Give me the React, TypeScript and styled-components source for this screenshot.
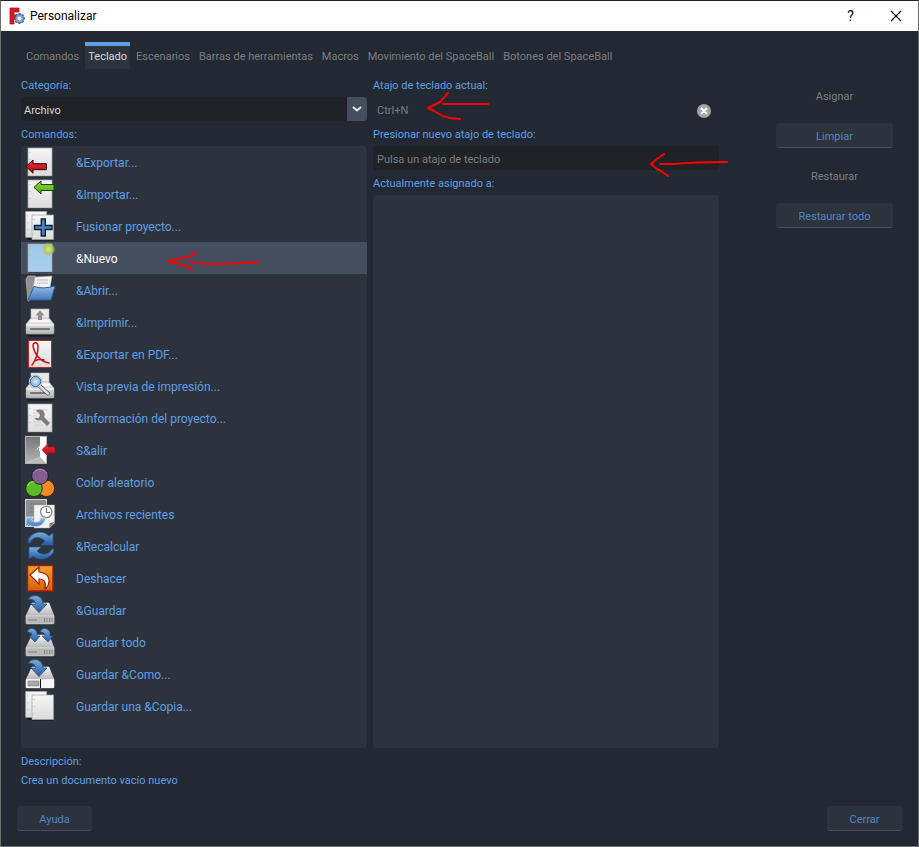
import React, { useState } from "react";
import styled, { createGlobalStyle, css } from "styled-components";

const color = {
  bg: "#232932",
  panel: "#2d333d",
  field: "#1f2226",
  selected: "#454e5e",
  link: "#5f9fe3",
  action: "#5285c4",
  muted: "#7c7e81",
  light: "#d8d8d8",
  edge: "#6e6e6e",
};

const GlobalStyle = createGlobalStyle`
  * { box-sizing: border-box; }
  body { margin: 0; background: ${color.bg}; }
  button, input, select { font: inherit; }
`;

const Dialog = styled.main`
  display: flex;
  flex-direction: column;
  min-height: 100vh;
  border: 1px solid ${color.edge};
  border-top-color: #25222a;
  background: ${color.bg};
  color: ${color.link};
  font-family: Roboto, "Open Sans", sans-serif;
  font-size: 11px;
  line-height: 16px;
`;

const TitleBar = styled.header`
  display: flex;
  align-items: center;
  height: 30px;
  padding-left: 8px;
  background: #fff;
  color: #000;
`;

const Title = styled.h1`
  flex: 1;
  margin: 0 0 0 5px;
  font-size: 12px;
  font-weight: 400;
`;

const TitleButton = styled.button`
  display: grid;
  place-items: center;
  width: 45px;
  height: 30px;
  padding: 0;
  border: 0;
  background: transparent;
  color: #000;
  font-size: 14px;
`;

const Tabs = styled.nav`
  display: flex;
  gap: 3px;
  padding: 11px 20px 0 22px;
`;

const Tab = styled.button<{ $active: boolean }>`
  height: 27px;
  padding: 0 3px 1px;
  border: 0;
  border-top: 4px solid transparent;
  background: transparent;
  color: ${color.muted};
  white-space: nowrap;
  ${(p) =>
    p.$active &&
    css`
      border-top-color: ${color.link};
      background: ${color.panel};
      color: ${color.light};
    `}
`;

const Column = styled.div`
  display: flex;
  flex-direction: column;
  min-width: 0;
`;

const Label = styled.label`
  display: block;
  height: 20px;
  padding-top: 1px;
`;

const ListLabel = styled.div`
  height: 25px;
  padding-top: 6px;
`;

const FieldLabel = styled(Label)`
  height: 25px;
  padding-top: 6px;
`;

const Combo = styled.div`
  display: grid;
  height: 24px;
  grid-template-columns: 1fr 20px;
  border-radius: 3px;
  overflow: hidden;
  background: ${color.field};
  > * { grid-row: 1; }
`;

const Select = styled.select`
  grid-column: 1 / 3;
  appearance: none;
  padding: 3px 24px 0 3px;
  border: 0;
  background: transparent;
  color: ${color.light};
`;

const ComboArrow = styled.span`
  grid-column: 2;
  display: grid;
  place-items: center;
  background: ${color.selected};
  pointer-events: none;
`;

const Field = styled.div<{ $plain?: boolean }>`
  position: relative;
  display: flex;
  align-items: center;
  height: 24px;
  padding: 3px 8px 0 4px;
  border-radius: 3px;
  background: ${(p) => (p.$plain ? "transparent" : color.field)};
`;

const TextInput = styled.input`
  flex: 1;
  min-width: 0;
  padding: 0;
  border: 0;
  background: transparent;
  color: ${color.muted};
  &::placeholder { color: ${color.muted}; opacity: 1; }
`;

const ClearButton = styled.button`
  display: grid;
  place-items: center;
  width: 14px;
  height: 14px;
  padding: 0;
  border: 0;
  border-radius: 50%;
  background: #a3a3a3;
`;

const Panel = styled.ul`
  flex: 1;
  margin: 0;
  padding: 0;
  list-style: none;
  border-radius: 3px;
  background: ${color.panel};
`;

const Row = styled.button<{ $selected: boolean }>`
  position: relative;
  display: flex;
  align-items: center;
  gap: 20px;
  width: 100%;
  height: 32px;
  padding: 0 3px;
  border: 0;
  background: ${(p) => (p.$selected ? color.selected : "transparent")};
  color: ${(p) => (p.$selected ? "#fff" : color.link)};
  font-size: 12px;
  text-align: left;
`;

const RowText = styled.span`
  padding-top: 2px;
`;

const Mark = styled.svg<{ $left: number; $top: number }>`
  position: absolute;
  left: ${(p) => p.$left}px;
  top: ${(p) => p.$top}px;
  fill: none;
  stroke: #f00;
  stroke-width: 2;
  stroke-linecap: round;
  stroke-linejoin: round;
  pointer-events: none;
  z-index: 1;
`;

const Actions = styled.div`
  display: flex;
  flex-direction: column;
  gap: 15px;
  margin-left: 51px;
  padding-top: 6px;
`;

const Action = styled.button`
  height: 25px;
  padding: 3px 8px 0;
  border: 0;
  border-bottom: 1px solid ${color.selected};
  border-radius: 3px;
  background: ${color.panel};
  color: ${color.action};
  &:disabled {
    border-color: transparent;
    background: transparent;
    color: ${color.muted};
  }
`;

const Content = styled.section`
  flex: 1;
  display: grid;
  grid-template-columns: minmax(0, 1fr) minmax(0, 1fr) 168px;
  column-gap: 6px;
  padding: 8px 25px 0 20px;
`;

const Description = styled.section`
  padding: 4px 20px 0;
  line-height: 19px;
  p { margin: 0; }
`;

const Footer = styled.footer`
  display: flex;
  justify-content: space-between;
  padding: 16px 16px 15px;
  ${Action} { width: 75px; }
`;

const Paper = ({ x = 4, y = 2, w = 24, h = 28, fill = "url(#paper)" }) => (
  <g>
    <path d={`M${x} ${y + h + 0.5}h${w}`} stroke="#15181d" />
    <rect x={x} y={y} width={w} height={h} fill={fill} stroke="#a2a4a4" strokeWidth=".7" />
    <path d={`M${x + 2} ${y + 4}v1M${x + 2} ${y + 11}v1M${x + 2} ${y + 18}v1`} stroke="#b5b5b5" />
  </g>
);

const Papers = () => (
  <g>
    <path d="M2 27h7v3H5z" fill="#111" />
    <Paper x={1.7} y={1.4} w={21} h={26} />
    <Paper x={8} y={5} w={21.5} h={24.5} />
  </g>
);

const Printer = () => (
  <g>
    <path d="M3 29h27v1.500H3z" fill="#171a20" />
    <path d="M7 3h18v10H7z" fill="#e9e9e9" stroke="#bbb" strokeWidth=".6" />
    <path d="M7 12h18l5 6v9q0 1-1 1H3q-1 0-1-1v-9z" fill="url(#metal)" stroke="#999" strokeWidth=".6" />
    <path d="M2.500 19h27" stroke="#fff" />
    <path d="M6 15h20" stroke="#f7f7f7" strokeWidth="2" />
    <path d="M6 23h20" stroke="#555" strokeWidth="1.400" />
  </g>
);

const Drive = () => (
  <g>
    <path d="M3 30h27v1H3z" fill="#171a20" />
    <path d="M8 9h17l5 13H2z" fill="url(#metal)" stroke="#ddd" strokeWidth=".6" />
    <path d="M2 22h28v7q0 1-1 1H3q-1 0-1-1z" fill="#b8b8b8" stroke="#e0e0e0" strokeWidth=".6" />
    <path d="M4 25h9v2H4z" fill="#999" />
    <path d="M20.500 24v4M23 24v4M25.500 24v4M28 24v4" stroke="#858585" />
  </g>
);

const SaveArrow = () => (
  <path
    d="M4 5Q7 1 12 1.500Q19 3 19 10h4l-8 8.500L7 10h5Q11 5 4 5z"
    fill="url(#blue)"
    stroke="#244e85"
    strokeWidth=".8"
  />
);

const Circle = ({ x, y, f, s }: { x: number; y: number; f: string; s: string }) => (
  <circle cx={x} cy={y} r="8.300" fill={f} stroke={s} />
);

const icons: Record<string, React.ReactNode> = {
  export: (
    <>
      <Paper />
      <path d="M2 20.500l7-6.500v3.700h13.500v6H9v3.500z" fill="url(#red)" stroke="#240303" />
    </>
  ),
  import: (
    <>
      <Paper />
      <path d="M10 9.300L17 3v3.500h13v6H17V16z" fill="url(#green)" stroke="#174400" />
    </>
  ),
  merge: (
    <>
      <Papers />
      <path
        d="M17.300 9h4v6.500H28v4h-6.700V26h-4v-6.500h-6.800v-4h6.800z"
        fill="#4c83bc"
        stroke="#0a213c"
        strokeWidth="1.400"
      />
    </>
  ),
  new: (
    <>
      <Paper fill="url(#sky)" />
      <circle cx="24.500" cy="7.300" r="7" fill="url(#glow)" />
    </>
  ),
  open: (
    <>
      <path d="M2 5L4 2h7l1 2h10v14H10L5 27H4z" fill="#909090" stroke="#b9b9b9" strokeWidth=".7" />
      <path d="M11 3l17-1-2 12-18 6z" fill="#f3f3f3" stroke="#aaa" strokeWidth=".6" />
      <path d="M13 6h11M13 9h11" stroke="#bbb" />
      <path d="M10 12.500q9 3 21-.5l-4 14H4z" fill="url(#blue2)" stroke="#335f9a" />
    </>
  ),
  print: (
    <>
      <Printer />
      <path d="M16 4.500l4.500 5H18V14h-4V9.500h-2.500z" fill="#8f8f8f" />
    </>
  ),
  pdf: (
    <>
      <rect x="4.500" y="2.500" width="23" height="27" fill="url(#paper)" stroke="#c42424" />
      <path
        d="M8 27C11 23 14 16 14 9 14 3 9 4 9 8 10 15 16 24 25 25M10.500 23Q16 20 20 22"
        fill="none"
        stroke="#cf1014"
        strokeWidth="1.500"
        strokeLinecap="round"
      />
    </>
  ),
  preview: (
    <>
      <Printer />
      <path d="M15.500 16l8.500 7.500" stroke="#555" strokeWidth="4" strokeLinecap="round" />
      <path d="M15.500 16l8.500 7.500" stroke="#ddd" strokeWidth="2.500" strokeLinecap="round" />
      <circle cx="11.500" cy="11.500" r="6.500" fill="#eee" stroke="#999" strokeWidth=".6" />
      <circle cx="11.500" cy="11.500" r="5.200" fill="url(#lens)" stroke="#366799" />
    </>
  ),
  info: (
    <>
      <Paper />
      <path d="M9 8h14M9 11h6M9 14h4M9 17h5M9 20h8M9 23h10" stroke="#ccc" />
      <path d="M12 9c2-2 7-2 8 1 1 2 .5 4 0 5l6 6-3 3-6-6c-3 1-6 0-6-2h4l1-3-1-2z" fill="#7d7d7d" />
    </>
  ),
  exit: (
    <>
      <rect x="1.500" y="2.400" width="21" height="27" fill="#fff" stroke="#b5b5b5" />
      <path d="M2 3h14v20L2 29z" fill="url(#door)" />
      <path d="M16 23l6 6H2z" fill="#bbb" />
      <path d="M12.500 16l3-4v5" fill="none" stroke="#e5e5e5" />
      <path d="M18 15.700l6-6V13h7v6h-7v3z" fill="url(#red)" stroke="#a60d15" strokeWidth=".7" />
    </>
  ),
  colors: (
    <>
      <Circle x={22.3} y={22.3} f="#f28a25" s="#4b2300" />
      <Circle x={10} y={22.3} f="#5dbb24" s="#173c06" />
      <Circle x={16} y={10} f="#81608d" s="#2c1735" />
      <path d="M9 8a7.500 7 0 0 1 14 0" fill="none" stroke="#a987b4" />
      <path d="M3.500 20a7 7 0 0 1 7-4" fill="none" stroke="#9de56c" />
    </>
  ),
  recent: (
    <>
      <rect x="1.500" y="1.500" width="21" height="27" fill="#8c8f91" stroke="#d0d0d0" />
      <path d="M6 6h13M6 10h6M6 14h5" stroke="#777b7d" />
      <path d="M10 7h20.500v18l-5 5H10z" fill="#f3f3f1" stroke="#aaa" strokeWidth=".5" />
      <path d="M30.500 24l-5 6v-5z" fill="#777" />
      <circle cx="22.300" cy="14" r="5.700" fill="#fff" stroke="#888" strokeWidth="1.300" />
      <path d="M22.300 10v4.500H26" fill="none" stroke="#666" />
      <path
        d="M2 19h8l-2.500 3q5 4 9 0l-1-2h6q-1 7-8 8.500-6 1-9-2L2 29z"
        fill="url(#blue2)"
        stroke="#d4e4f7"
        strokeWidth=".7"
      />
    </>
  ),
  refresh: (
    <>
      <path
        d="M4.500 9C9 1 20 0 25 6l4-3v12H17l4-4C16 6 9 6 6 13H4z"
        fill="url(#blue)"
        stroke="#285994"
        strokeWidth=".8"
      />
      <path
        d="M29.500 22C25 30 14 31 9 26l-4 3V17h12l-4 4c5 5 12 4 15-2h1.500z"
        fill="url(#blue)"
        stroke="#285994"
        strokeWidth=".8"
      />
    </>
  ),
  undo: (
    <>
      <rect x="3.500" y="3.500" width="25.500" height="25.500" fill="url(#orange)" stroke="#a61906" strokeWidth="1.400" />
      <path d="M6 13l9-8v5q10 1 10 9-.5 6-4 8 2-10-6-10v5z" fill="#fff" stroke="#a41f0c" strokeWidth="1.200" />
    </>
  ),
  save: (
    <>
      <Drive />
      <SaveArrow />
    </>
  ),
  saveAll: (
    <>
      <Drive />
      <path
        d="M3 6Q5 1 10 3q4 2 3 7h3l-5 6-6-6h3Q8 6 3 6zM16 6q2-5 7-3 4 2 3 7h3l-5 6-6-6h3q0-4-5-4z"
        fill="url(#blue)"
        stroke="#244e85"
        strokeWidth=".7"
      />
    </>
  ),
  saveAs: (
    <>
      <Drive />
      <path d="M2 21h28v9H2z" fill="#f5f5f5" />
      <path d="M4 23h11v5H4z" fill="#aaa" stroke="#777" strokeWidth=".6" />
      <path d="M16.500 21v9" stroke="#111" />
      <SaveArrow />
    </>
  ),
  copy: <Papers />,
};

const gradients: [string, string, string][] = [
  ["paper", "#f6f6f6", "#dcdcdc"],
  ["metal", "#f4f4f4", "#b5b5b5"],
  ["red", "#ed3035", "#b40811"],
  ["green", "#8bdc37", "#4fae14"],
  ["blue", "#7eacd9", "#235ba2"],
  ["blue2", "#96bdeb", "#4379b8"],
  ["sky", "#a1c6e9", "#a9cff0"],
  ["orange", "#efa12e", "#d95f05"],
  ["door", "#777", "#b5b5b5"],
];

const HiddenSvg = styled.svg`
  display: block;
  width: 0;
  height: 0;
`;

const Definitions = () => (
  <HiddenSvg aria-hidden="true">
    <defs>
      {gradients.map(([id, from, to]) => (
        <linearGradient id={id} key={id} x1="0" y1="0" x2="0" y2="1">
          <stop stopColor={from} />
          <stop offset="1" stopColor={to} />
        </linearGradient>
      ))}
      <radialGradient id="glow">
        <stop stopColor="#e5e78a" />
        <stop offset=".35" stopColor="#c4d563" />
        <stop offset=".65" stopColor="#acc568" stopOpacity=".85" />
        <stop offset="1" stopColor="#acc568" stopOpacity="0" />
      </radialGradient>
      <radialGradient id="lens">
        <stop stopColor="#d9e9fa" />
        <stop offset="1" stopColor="#82aedd" />
      </radialGradient>
    </defs>
  </HiddenSvg>
);

const commands: [string, string][] = [
  ["export", "&Exportar..."],
  ["import", "&Importar..."],
  ["merge", "Fusionar proyecto..."],
  ["new", "&Nuevo"],
  ["open", "&Abrir..."],
  ["print", "&Imprimir..."],
  ["pdf", "&Exportar en PDF..."],
  ["preview", "Vista previa de impresión..."],
  ["info", "&Información del proyecto..."],
  ["exit", "S&alir"],
  ["colors", "Color aleatorio"],
  ["recent", "Archivos recientes"],
  ["refresh", "&Recalcular"],
  ["undo", "Deshacer"],
  ["save", "&Guardar"],
  ["saveAll", "Guardar todo"],
  ["saveAs", "Guardar &Como..."],
  ["copy", "Guardar una &Copia..."],
];

const tabs = [
  "Comandos",
  "Teclado",
  "Escenarios",
  "Barras de herramientas",
  "Macros",
  "Movimiento del SpaceBall",
  "Botones del SpaceBall",
];

const Logo = () => (
  <svg width="16" height="18" viewBox="0 0 16 18" aria-hidden="true">
    <path d="M1 1h9v4H5v3h4v4H5v5H1z" fill="#d71920" stroke="#941016" strokeWidth=".7" />
    <g transform="translate(10.5 11.5)">
      <path
        d="M0-5.500v11M-5.500 0h11M-3.900-3.900l7.800 7.800M3.900-3.900l-7.800 7.800"
        stroke="#365b91"
        strokeWidth="2"
      />
      <circle r="3" fill="#fff" stroke="#365b91" strokeWidth="3" />
      <circle r="3" fill="#fff" stroke="#7ca1d0" strokeWidth="2" />
    </g>
  </svg>
);

export default function App() {
  const [tab, setTab] = useState("Teclado");
  const [command, setCommand] = useState("new");
  const [current, setCurrent] = useState("Ctrl+N");
  const [next, setNext] = useState("");

  return (
    <>
      <GlobalStyle />
      <Dialog>
        <TitleBar>
          <Logo />
          <Title>Personalizar</Title>
          <TitleButton aria-label="Ayuda de la ventana">?</TitleButton>
          <TitleButton aria-label="Cerrar ventana">
            <svg width="12" height="12" viewBox="0 0 12 12" aria-hidden="true">
              <path d="M1 1l10 10M11 1L1 11" stroke="#000" strokeWidth="1.100" />
            </svg>
          </TitleButton>
        </TitleBar>
        <Tabs>
          {tabs.map((name) => (
            <Tab key={name} $active={name === tab} onClick={() => setTab(name)}>
              {name}
            </Tab>
          ))}
        </Tabs>
        <Content>
          <Column>
            <Label htmlFor="category">Categoría:</Label>
            <Combo>
              <ComboArrow>
                <svg width="10" height="6" viewBox="0 0 10 6" aria-hidden="true">
                  <path d="M1 1l4 3.500L9 1" fill="none" stroke="#e8e8e8" strokeWidth="2" />
                </svg>
              </ComboArrow>
              <Select id="category">
                <option>Archivo</option>
              </Select>
            </Combo>
            <ListLabel id="commands-label">Comandos:</ListLabel>
            <Panel aria-labelledby="commands-label">
              {commands.map(([id, text]) => (
                <li key={id}>
                  <Row $selected={id === command} aria-pressed={id === command} onClick={() => setCommand(id)}>
                    <svg width="32" height="32" viewBox="0 0 32 32" aria-hidden="true">
                      {icons[id]}
                    </svg>
                    <RowText>{text}</RowText>
                    {id === "new" && (
                      <Mark $left={146} $top={8} width="94" height="22" aria-hidden="true">
                        <path d="M29 2l-5 4-13 3-10 2 10 3 9 2 5 4M23 11q5 3 20 3 20 0 48-2" />
                      </Mark>
                    )}
                  </Row>
                </li>
              ))}
            </Panel>
          </Column>
          <Column>
            <Label htmlFor="current">Atajo de teclado actual:</Label>
            <Field $plain>
              <TextInput id="current" value={current} readOnly />
              <ClearButton aria-label="Borrar atajo" onClick={() => setCurrent("")}>
                <svg width="8" height="8" viewBox="0 0 8 8" aria-hidden="true">
                  <path d="M1 1l6 6M7 1L1 7" stroke="#fff" strokeWidth="2" />
                </svg>
              </ClearButton>
              <Mark $left={54} $top={-6} width="64" height="30" aria-hidden="true">
                <path d="M21 2l-8 9-12 6 6 3 9 5 7 2 10 1M16 13h45" />
              </Mark>
            </Field>
            <FieldLabel htmlFor="next">Presionar nuevo atajo de teclado:</FieldLabel>
            <Field>
              <TextInput
                id="next"
                placeholder="Pulsa un atajo de teclado"
                value={next}
                onChange={(e) => setNext(e.target.value)}
              />
              <Mark $left={276} $top={6} width="80" height="26" aria-hidden="true">
                <path d="M15 2L8 7l-6 5 6 5 4 2 7 5M11 12h14q20-2 53-2" />
              </Mark>
            </Field>
            <ListLabel id="assigned-label">Actualmente asignado a:</ListLabel>
            <Panel aria-labelledby="assigned-label" />
          </Column>
          <Actions>
            <Action disabled>Asignar</Action>
            <Action>Limpiar</Action>
            <Action disabled>Restaurar</Action>
            <Action>Restaurar todo</Action>
          </Actions>
        </Content>
        <Description>
          <p>Descripción:</p>
          <p>Crea un documento vacío nuevo</p>
        </Description>
        <Footer>
          <Action>Ayuda</Action>
          <Action>Cerrar</Action>
        </Footer>
      </Dialog>
      <Definitions />
    </>
  );
}
